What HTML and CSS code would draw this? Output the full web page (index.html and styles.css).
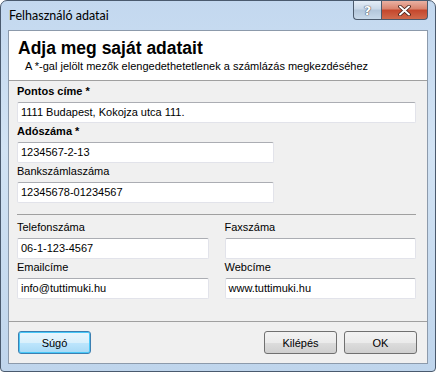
FILE: index.html
```html
<!DOCTYPE html>
<html lang="hu">
<head>
  <meta charset="UTF-8" />
  <title>Felhasználó adatai</title>
  <link rel="stylesheet" href="styles.css">
</head>
<body>

  <div class="window">
    <!-- Title bar -->
    <div class="titlebar">
      <span class="title">Felhasználó adatai</span>
      <div class="caption-btns">
        <div class="cap-btn help">?</div>
        <div class="cap-btn close">
          <svg width="13" height="11" viewBox="0 0 13 11">
            <path d="M2 1.5 L11 9.5 M11 1.5 L2 9.5" stroke="#3b1a14" stroke-width="3.6" stroke-linecap="round"/>
            <path d="M2 1.5 L11 9.5 M11 1.5 L2 9.5" stroke="#ffffff" stroke-width="2" stroke-linecap="round"/>
          </svg>
        </div>
      </div>
    </div>

    <div class="client">
      <!-- Header -->
      <div class="header">
        <h1>Adja meg saját adatait</h1>
        <p>A *-gal jelölt mezők elengedethetetlenek a számlázás megkezdéséhez</p>
      </div>

      <!-- Form -->
      <div class="form">
        <label class="req">Pontos címe *</label>
        <div class="field">1111 Budapest, Kokojza utca 111.</div>

        <label class="req">Adószáma *</label>
        <div class="field half">1234567-2-13</div>

        <label>Bankszámlaszáma</label>
        <div class="field half">12345678-01234567</div>

        <hr class="sep">

        <div class="grid">
          <div>
            <label>Telefonszáma</label>
            <div class="field">06-1-123-4567</div>
          </div>
          <div>
            <label>Faxszáma</label>
            <div class="field"></div>
          </div>
          <div>
            <label>Emailcíme</label>
            <div class="field">info@tuttimuki.hu</div>
          </div>
          <div>
            <label>Webcíme</label>
            <div class="field">www.tuttimuki.hu</div>
          </div>
        </div>
      </div>

      <!-- Buttons -->
      <div class="footer">
        <button class="btn focused">Súgó</button>
        <div class="right-btns">
          <button class="btn">Kilépés</button>
          <button class="btn">OK</button>
        </div>
      </div>
    </div>
  </div>

</body>
</html>
```

FILE: styles.css
```css
* {
  margin: 0;
  padding: 0;
  box-sizing: border-box;
}

body {
  font-family: 'Liberation Sans', Arial, sans-serif;
  font-size: 11px;
  color: #000;
  background: #ffffff;
  width: 436px;
  height: 372px;
  overflow: hidden;
}

/* Window frame */
.window {
  width: 436px;
  height: 372px;
  border: 1px solid #4a5a6e;
  border-radius: 7px 7px 4px 4px;
  background: linear-gradient(180deg, #c3d8ef 0%, #d2e3f4 40%, #bfd5ec 100%);
  display: flex;
  flex-direction: column;
}

.titlebar {
  height: 29px;
  display: flex;
  justify-content: space-between;
  align-items: flex-start;
}

.title {
  font-family: Lato, sans-serif;
  font-size: 12.5px;
  margin: 7px 0 0 8px;
  color: #000;
}

.caption-btns {
  display: flex;
  margin-right: 7px;
}

.cap-btn {
  height: 19px;
  border: 1px solid #4c5a6c;
  border-top: none;
  display: flex;
  align-items: center;
  justify-content: center;
}

.cap-btn.help {
  width: 28px;
  border-right: none;
  border-radius: 0 0 0 4px;
  background: linear-gradient(180deg, #e4edf7 0%, #c9d8e8 45%, #b3c6da 50%, #c8d9ea 100%);
  color: #ffffff;
  font-family: 'DejaVu Sans', sans-serif;
  font-size: 13px;
  font-weight: bold;
  text-shadow: 0 0 1px #334, 0 0 1px #334;
}

.cap-btn.close {
  width: 47px;
  border-radius: 0 0 4px 0;
  background: linear-gradient(180deg, #eab1a3 0%, #d9826c 45%, #c4462c 50%, #d06a4c 100%);
}

/* Client area */
.client {
  flex: 1;
  margin: 0 7px 7px 7px;
  border: 1px solid #8c9aab;
  background: #f0f0f0;
  display: flex;
  flex-direction: column;
}

.header {
  background: #ffffff;
  border-bottom: 1px solid #a0a0a0;
  padding: 6px 9px 4px;
  height: 50px;
}

.header h1 {
  font-size: 17.5px;
  font-weight: bold;
  line-height: 22px;
}

.header p {
  line-height: 15px;
  padding-left: 7px;
}

/* Form */
.form {
  padding: 2px 11px 0 8px;
  flex: 1;
}

label {
  display: block;
  line-height: 15px;
  height: 19px;
  padding-top: 1px;
}

label.req {
  font-weight: bold;
}

.field {
  height: 21px;
  background: #ffffff;
  border: 1px solid #e2e3ea;
  border-top-color: #abadb3;
  border-radius: 2px;
  padding: 2px 3px;
  line-height: 15px;
}

.field.half {
  width: 257px;
}

.sep {
  border: none;
  border-top: 1px solid #a0a0a0;
  margin: 11px 0 4px;
}

.grid {
  display: grid;
  grid-template-columns: 1fr 1fr;
  column-gap: 16px;
}

/* Footer buttons */
.footer {
  border-top: 1px solid #a0a0a0;
  padding: 9px 10px 9px 9px;
  display: flex;
  justify-content: space-between;
}

.right-btns {
  display: flex;
  gap: 7px;
}

.btn {
  width: 73px;
  height: 23px;
  font-family: inherit;
  font-size: 11px;
  color: #000;
  border: 1px solid #707070;
  border-radius: 3px;
  background: linear-gradient(180deg, #f2f2f2 0%, #ebebeb 50%, #dddddd 51%, #cfcfcf 100%);
}

.btn.focused {
  border-color: #3c7fb1;
  background: linear-gradient(180deg, #eaf6fd 0%, #d9f0fc 50%, #bee6fd 51%, #a7d9f5 100%);
  box-shadow: inset 0 0 0 1px #48c8f8;
}
```
